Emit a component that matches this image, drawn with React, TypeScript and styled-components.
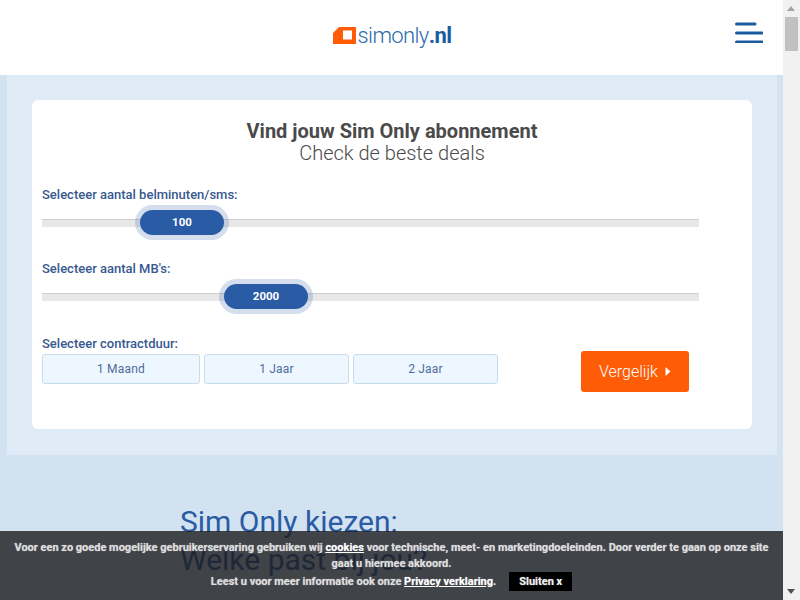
import React from "react";
import styled, { createGlobalStyle } from "styled-components";

const GlobalStyle = createGlobalStyle`
  html, body {
    margin: 0;
    padding: 0;
    height: 600px;
    overflow: hidden;
  }
  * {
    box-sizing: border-box;
  }
  body {
    font-family: "Roboto", "Liberation Sans", sans-serif;
  }
`;

const sliders = [
  { label: "Selecteer aantal belminuten/sms:", value: "100", left: 98 },
  { label: "Selecteer aantal MB's:", value: "2000", left: 182 },
];

const durations = [
  { label: "1 Maand", width: 158 },
  { label: "1 Jaar", width: 145 },
  { label: "2 Jaar", width: 145 },
];

const App: React.FC = () => {
  return (
    <>
      <GlobalStyle />
      <Viewport>
        <Main>
          <Header>
            <Logo>
              <svg width="23" height="17" viewBox="0 0 23 17">
                <path d="M6 0H23V17H0V6Z" fill="#ff5c08" />
                <rect x="10" y="3.5" width="9" height="9" fill="#fff" />
              </svg>
              <LogoText>
                simonly<b>.nl</b>
              </LogoText>
            </Logo>
            <Burger>
              <svg width="28" height="21" viewBox="0 0 28 21">
                <g stroke="#1a5c9f" strokeWidth="3" strokeLinecap="round">
                  <line x1="1.5" y1="2" x2="20" y2="2" />
                  <line x1="1.5" y1="11" x2="27" y2="11" />
                  <line x1="1.5" y1="20" x2="27" y2="20" />
                </g>
              </svg>
            </Burger>
          </Header>
          <Panel>
            <Card>
              <Title>Vind jouw Sim Only abonnement</Title>
              <SubTitle>Check de beste deals</SubTitle>
              {sliders.map((s) => (
                <SliderBlock key={s.label}>
                  <FieldLabel>{s.label}</FieldLabel>
                  <Track>
                    <Thumb $left={s.left}>{s.value}</Thumb>
                  </Track>
                </SliderBlock>
              ))}
              <FieldLabel>Selecteer contractduur:</FieldLabel>
              <BottomRow>
                <Durations>
                  {durations.map((d) => (
                    <Duration key={d.label} $width={d.width}>
                      {d.label}
                    </Duration>
                  ))}
                </Durations>
                <Compare>
                  Vergelijk
                  <svg width="6" height="9" viewBox="0 0 6 9">
                    <path d="M0.5 0L5.5 4.5L0.5 9Z" fill="#fff" />
                  </svg>
                </Compare>
              </BottomRow>
            </Card>
          </Panel>
          <Intro>
            <IntroTitle>Sim Only kiezen:</IntroTitle>
            <IntroSub>Welke past bij jou?</IntroSub>
          </Intro>
          <Cookie>
            <CookieLine>
              Voor een zo goede mogelijke gebruikerservaring gebruiken wij{" "}
              <CookieLink>cookies</CookieLink> voor technische, meet- en
              marketingdoeleinden. Door verder te gaan op onze site gaat u
              hiermee akkoord.
            </CookieLine>
            <CookieLine>
              Leest u voor meer informatie ook onze{" "}
              <CookieLink>Privacy verklaring</CookieLink>.
              <CloseButton>Sluiten x</CloseButton>
            </CookieLine>
          </Cookie>
        </Main>
        <Scrollbar>
          <ArrowUp />
          <ScrollThumb />
          <ArrowDown />
        </Scrollbar>
      </Viewport>
    </>
  );
};

export default App;

const Viewport = styled.div`
  display: flex;
  width: 800px;
  height: 600px;
  overflow: hidden;
`;

const Main = styled.div`
  position: relative;
  width: 783px;
  height: 600px;
  overflow: hidden;
  background: #d3e2f0;
`;

const Header = styled.header`
  position: relative;
  height: 75px;
  background: #fff;
  display: flex;
  align-items: center;
  justify-content: center;
`;

const Logo = styled.div`
  display: flex;
  align-items: center;
  gap: 2px;
  margin-top: -4px;
  margin-left: 1px;
`;

const LogoText = styled.span`
  font-size: 22px;
  font-weight: 300;
  letter-spacing: -0.6px;
  color: #2a6aa8;
  b {
    font-weight: 700;
    color: #1a5c9f;
  }
`;

const Burger = styled.div`
  position: absolute;
  left: 735px;
  top: 22px;
  line-height: 0;
`;

const Panel = styled.section`
  margin: 0 6px 0 7px;
  height: 380px;
  padding: 25px;
  background: #dfebf7;
`;

const Card = styled.div`
  height: 329px;
  padding: 20px 10px 0;
  background: #fff;
  border-radius: 6px;
`;

const Title = styled.h2`
  margin: 0;
  text-align: center;
  font-size: 20px;
  line-height: 22px;
  font-weight: 700;
  color: #4a4a4a;
`;

const SubTitle = styled.p`
  margin: 0 0 23px;
  text-align: center;
  font-size: 20px;
  line-height: 22px;
  font-weight: 300;
  color: #4a4a4a;
`;

const SliderBlock = styled.div`
  height: 68px;
  margin-bottom: 6px;
  &:nth-of-type(2) {
    margin-bottom: 7px;
  }
`;

const FieldLabel = styled.div`
  height: 16px;
  font-size: 13px;
  line-height: 16px;
  font-weight: 500;
  color: #38598f;
`;

const Track = styled.div`
  position: relative;
  width: 657px;
  height: 8px;
  margin-top: 16px;
  background: #e8e8e8;
  border-top: 1px solid #cfcfcf;
`;

const Thumb = styled.div<{ $left: number }>`
  position: absolute;
  left: ${(p) => p.$left}px;
  top: -10px;
  width: 84px;
  height: 25px;
  border-radius: 13px;
  background: #2a5ba5;
  box-shadow: 0 0 0 5px rgba(42, 91, 165, 0.2);
  color: #fff;
  font-size: 11.5px;
  font-weight: 700;
  line-height: 25px;
  text-align: center;
`;

const BottomRow = styled.div`
  display: flex;
  align-items: flex-start;
  margin-top: -1px;
`;

const Durations = styled.div`
  display: flex;
  gap: 4px;
  margin-top: 3px;
`;

const Duration = styled.button<{ $width: number }>`
  width: ${(p) => p.$width}px;
  height: 30px;
  padding: 0;
  background: #eef7ff;
  border: 1px solid #c5dcec;
  border-radius: 3px;
  font-family: inherit;
  font-size: 12px;
  font-weight: 400;
  letter-spacing: 0.2px;
  color: #4f6b9c;
`;

const Compare = styled.button`
  display: flex;
  align-items: center;
  justify-content: center;
  gap: 7px;
  width: 108px;
  height: 41px;
  margin-left: 83px;
  padding: 0;
  border: 0;
  border-radius: 3px;
  background: #ff5c08;
  color: #fff;
  font-family: inherit;
  font-size: 16px;
  font-weight: 300;
`;

const Intro = styled.section`
  padding: 50px 0 0 173px;
  margin-left: 7px;
`;

const IntroTitle = styled.h2`
  margin: 0;
  font-size: 30px;
  line-height: 34px;
  font-weight: 400;
  color: #2a5ba5;
`;

const IntroSub = styled.p`
  margin: 0;
  font-size: 30px;
  line-height: 42px;
  font-weight: 400;
  color: #2a5ba5;
`;

const Cookie = styled.div`
  position: absolute;
  left: 0;
  right: 0;
  bottom: 0;
  height: 69px;
  padding: 9px 10px 0;
  background: rgba(27, 27, 29, 0.8);
  color: #ddd;
  text-align: center;
  font-size: 11px;
  line-height: 16px;
  font-weight: 700;
  text-shadow: 0 0 1px rgba(221, 221, 221, 0.7);
`;

const CookieLine = styled.div``;

const CookieLink = styled.span`
  color: #fff;
  text-decoration: underline;
`;

const CloseButton = styled.span`
  display: inline-block;
  margin-left: 13px;
  padding: 0 10px;
  height: 19px;
  line-height: 19px;
  background: #000;
  color: #eee;
`;

const Scrollbar = styled.div`
  position: relative;
  width: 17px;
  height: 600px;
  background: #f1f1f1;
`;

const ScrollThumb = styled.div`
  position: absolute;
  left: 2px;
  top: 17px;
  width: 13px;
  height: 34px;
  background: #c1c1c1;
`;

const ArrowUp = styled.div`
  position: absolute;
  left: 4px;
  top: 6px;
  border-left: 4.5px solid transparent;
  border-right: 4.5px solid transparent;
  border-bottom: 5px solid #a3a3a3;
`;

const ArrowDown = styled.div`
  position: absolute;
  left: 4px;
  bottom: 6px;
  border-left: 4.5px solid transparent;
  border-right: 4.5px solid transparent;
  border-top: 5px solid #505050;
`;
